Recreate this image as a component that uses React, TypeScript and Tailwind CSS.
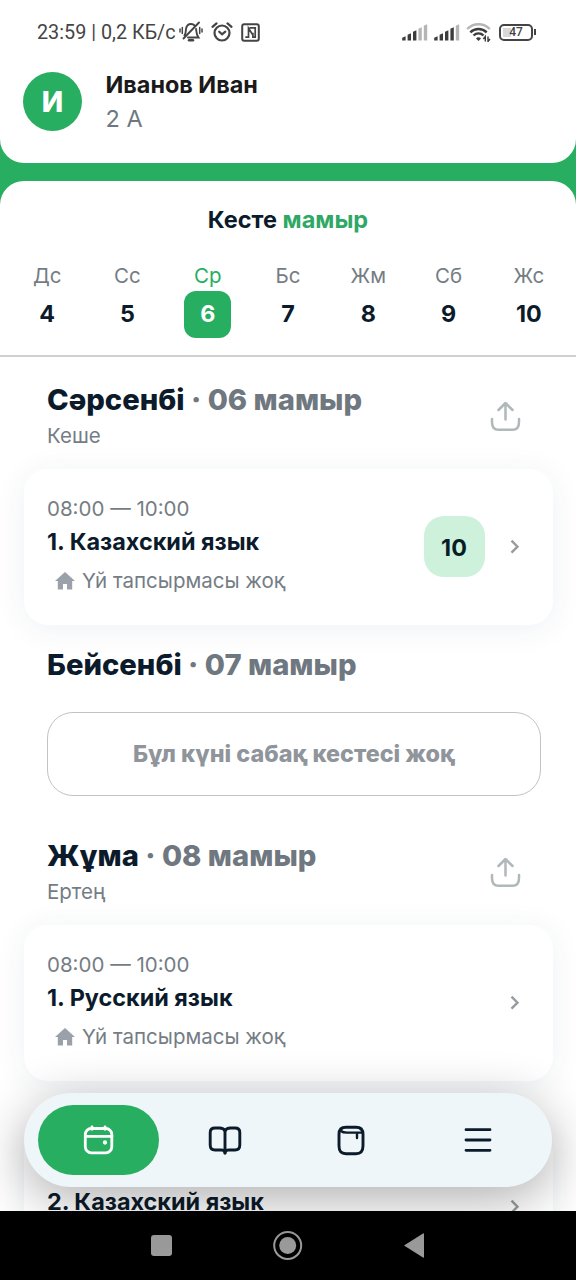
import React from "react";

interface DayProps {
  label: string;
  date: number;
  active?: boolean;
}

interface LessonProps {
  time: string;
  title: string;
  homework?: string;
  mark?: number;
}

interface DayTitleProps {
  day: string;
  date: string;
  note?: string;
}

const days: DayProps[] = [
  { label: "Дс", date: 4 },
  { label: "Сс", date: 5 },
  { label: "Ср", date: 6, active: true },
  { label: "Бс", date: 7 },
  { label: "Жм", date: 8 },
  { label: "Сб", date: 9 },
  { label: "Жс", date: 10 },
];

const Signal = ({ level }: { level: number }) => (
  <svg width="26" height="17" viewBox="0 0 26 17">
    {[4, 7, 10, 13, 16].map((h, i) => (
      <path
        key={h}
        d={`M${i * 5.4 + 0.2} 16.5V${17.7 - h}L${i * 5.4 + 3.6} ${16.2 - h}V16.5Z`}
        fill={i < level ? "#3c3c3c" : "#b5b5b5"}
      />
    ))}
  </svg>
);

const BellOff = () => (
  <svg width="24" height="22" viewBox="0 0 24 22" fill="none" stroke="#444" strokeWidth="1.9" strokeLinecap="round">
    <path d="M5.5 14.5C7 12.8 6.6 10.4 7 7.8 7.5 4.8 9.5 3 12 3c1.6 0 2.8.6 3.7 1.7" />
    <path d="M17.1 8c.4 3.4.1 5.2 2.4 8.5H9" />
    <path d="M20 1.5 4.5 17.5" />
    <path d="M10 19.3h4" strokeWidth="2.4" />
    <path d="M3.3 6.5v6M1 8v3M20.7 6.5v6M23 8v3" strokeWidth="1.5" />
  </svg>
);

const Alarm = () => (
  <svg width="22" height="20" viewBox="0 0 22 20" fill="none" stroke="#444" strokeWidth="2.2" strokeLinecap="round">
    <circle cx="11" cy="11" r="7.5" />
    <path d="M1.5 4.8 5.5 1.4M20.5 4.8 16.5 1.4" />
    <path d="m8.2 9.7 2.9 2.6 3.2-2.6" />
  </svg>
);

const Nfc = () => (
  <svg width="19" height="19" viewBox="0 0 19 19" fill="none" stroke="#444" strokeWidth="2">
    <rect x="1.2" y="1.2" width="16.6" height="16.6" rx="2" />
    <path d="M4.3 14.2h3.2V5.2l4.4 6.8M8.5 4.8h5.7v9.4h-2.3V9.8" strokeWidth="1.7" />
  </svg>
);

const Wifi = () => (
  <svg width="26" height="19" viewBox="0 0 26 19" fill="none" strokeWidth="2.4">
    <path d="M1.2 6C7.5-.4 17.5-.4 23.8 6" stroke="#b5b5b5" />
    <path d="M4.3 9.3c4.6-4.5 11.8-4.5 16.4 0" stroke="#3c3c3c" />
    <path d="M7.5 12.5c2.9-2.8 7.2-2.8 10 0" stroke="#3c3c3c" />
    <path d="m12.5 18-2.5-2.6c1.4-1.4 3.6-1.4 5 0Z" fill="#3c3c3c" />
    <path d="m19.3 18.5v-5l-2 2.5M22 13.5v5l2-2.5" stroke="#3c3c3c" strokeWidth="1.4" />
  </svg>
);

const StatusBar = () => (
  <div className="flex h-16 items-center justify-between pl-[37px] pr-10 font-['Roboto',sans-serif]">
    <div className="flex items-center">
      <span className="w-[142px] whitespace-nowrap pt-px text-[19.8px] text-[#454545]">23:59 | 0,2 КБ/с</span>
      <BellOff />
      <span className="ml-2 mr-2 flex"><Alarm /></span>
      <Nfc />
    </div>
    <div className="flex items-center">
      <Signal level={3} />
      <span className="ml-1.5 flex"><Signal level={4} /></span>
      <span className="ml-1.5 flex"><Wifi /></span>
      <span className="relative ml-[7px] flex h-[17px] w-[34px] items-center justify-center rounded-[5px] border-2 border-[#444] text-[12px] font-medium text-[#444]">
        <span className="absolute left-0.5 top-0.5 h-[9px] w-2 bg-[#d8d8d8]" />
        <span className="relative">47</span>
      </span>
      <span className="ml-px h-1.5 w-0.5 bg-[#444]" />
    </div>
  </div>
);

const Header = () => (
  <header className="h-[163px] rounded-b-3xl bg-white">
    <StatusBar />
    <div className="flex h-[75px] items-center pl-[23px]">
      <div className="flex size-[59px] items-center justify-center rounded-full bg-[#27ae60] text-[28px] font-extrabold text-white">И</div>
      <div className="ml-[23.5px] text-[23.5px]">
        <p className="text-[23.4px] font-bold leading-[34px] text-[#1a1a1a]">Иванов Иван</p>
        <p className="leading-[33px] text-[#6f7881]">2 А</p>
      </div>
    </div>
  </header>
);

const Week = () => (
  <section className="mt-[18px] h-[176px] shrink-0 rounded-t-3xl border-b-2 border-[#cfcfcf] bg-white pt-5 text-[#0b1b2b]">
    <h1 className="text-center text-[23.5px] font-bold leading-[38px]">
      Кесте <span className="text-[#2fa866]">мамыр</span>
    </h1>
    <div className="mt-[22px] grid grid-cols-7 px-[7px]">
      {days.map((d) => (
        <div key={d.label} className="flex flex-col items-center">
          <span className={d.active ? "text-[20.5px] leading-[30px] text-[#27ae60]" : "text-[20.5px] leading-[30px] text-[#757d84]"}>
            {d.label}
          </span>
          <span
            className={
              d.active
                ? "flex size-[47px] items-center justify-center rounded-xl bg-[#27ae60] text-[23.3px] font-bold text-white"
                : "flex size-[47px] items-center justify-center text-[23.3px] font-bold"
            }
          >
            {d.date}
          </span>
        </div>
      ))}
    </div>
  </section>
);

const DayTitle = ({ day, date, note }: DayTitleProps) => (
  <div className="flex items-center justify-between pl-[47px] pr-[55px]">
    <div>
      <h2 className="pb-px text-[29.2px] font-extrabold leading-[39px] text-[#6f7780]">
        <span className="text-[#0b1b2b]">{day}</span> · {date}
      </h2>
      {note && <p className="text-[20.5px] leading-8 text-[#757d84]">{note}</p>}
    </div>
    {note && (
      <svg className="mt-px shrink-0" width="31" height="31" viewBox="0 0 31 31" fill="none" stroke="#b0b8ba" strokeWidth="2.5" strokeLinecap="round" strokeLinejoin="round">
        <path d="M15.5 18.5V2M8.5 9 15.5 2 22.5 9" />
        <path d="M2 18v3c0 5 2 7.8 6.5 7.8h14c4.5 0 6.5-2.8 6.5-7.8v-3" />
      </svg>
    )}
  </div>
);

const Lesson = ({ time, title, homework, mark }: LessonProps) => (
  <div className="mx-[23.5px] flex h-[156px] shrink-0 items-center rounded-3xl bg-white pl-[23.5px] pr-8 shadow-[0_4px_32px_rgba(20,50,80,0.07)]">
    <div className="h-[108px] flex-1 text-[20.5px] text-[#757d84]">
      <p className="leading-8">{time}</p>
      <p className="text-[23.4px] font-bold leading-[34px] text-[#0b1b2b]">{title}</p>
      {homework && (
        <p className="flex items-center gap-[7px] pl-2 leading-[44px]">
          <svg width="20" height="18" viewBox="0 0 20 18" fill="#9ba1aa">
            <path d="M10 0 20 9h-2.8v8.500h-5.200v-5.500h-4v5.500H2.800V9H0Z" />
          </svg>
          {homework}
        </p>
      )}
    </div>
    {mark && (
      <span className="mr-6 flex size-[61px] items-center justify-center rounded-[20px] bg-[#cdf1db] pt-1 text-[23.3px] font-bold text-[#061f26]">
        {mark}
      </span>
    )}
    <svg width="12" height="16" viewBox="0 0 12 16" fill="none" stroke="#989c9f" strokeWidth="2.4">
      <path d="m2.5 1.7 6 6-6 6" />
    </svg>
  </div>
);

const TabBar = () => (
  <nav className="absolute left-6 top-[1093px] flex h-[94px] w-[528px] items-center rounded-full bg-[#eff6f9] pl-3.5 pr-[11px] text-[#0b1b2b] shadow-[0_12px_52px_rgba(0,0,0,0.32)]">
    <div className="mr-[3px] flex h-[70px] w-[121px] items-center justify-center rounded-full bg-[#27ae60]">
      <svg width="32" height="32" viewBox="0 0 32 32" fill="none" stroke="white" strokeWidth="2.8" strokeLinecap="round">
        <rect x="2.3" y="4.5" width="26.5" height="24.3" rx="6" />
        <path d="M3 12.3h26M9 2.8v2.5M22 2.8v2.5" />
        <circle cx="22" cy="18.5" r="1.3" fill="white" strokeWidth="1.7" />
      </svg>
    </div>
    <div className="flex flex-1 items-center justify-center">
      <svg width="34" height="32" viewBox="0 0 34 32" fill="none" stroke="currentColor" strokeWidth="2.9" strokeLinecap="round" strokeLinejoin="round">
        <path d="M17 6.8C16 4.7 14 4 11.5 4H7C3.5 4 2.2 5.5 2.2 8.5v12.5c0 3.5 1.3 5 4.8 5h6c2.5 0 4 .5 4 2.8 0-2.3 1.5-2.8 4-2.8h6c3.5 0 4.800-1.500 4.800-5V8.500C31.800 5.500 30.500 4 27 4h-4.500C20 4 18 4.700 17 6.800Z" />
        <path d="M17 6.8v22.500" />
      </svg>
    </div>
    <div className="flex flex-1 items-center justify-center">
      <svg width="28" height="32" viewBox="0 0 28 32" fill="none" stroke="currentColor" strokeWidth="2.9" strokeLinecap="round" strokeLinejoin="round">
        <path d="M9 3.2h10c5 0 7 2.5 7 7v11.5c0 5.5-2 8-7 8H9c-5 0-7-2.5-7-8V10.2c0-4.5 2-7 7-7Z" />
        <path d="M4 7c2 1.8 4 1.6 7 1.6h13.5M20 8.6v5.4" strokeWidth="2.4" />
      </svg>
    </div>
    <div className="flex flex-1 items-center justify-center">
      <svg width="28" height="24" viewBox="0 0 28 24" fill="none" stroke="currentColor" strokeWidth="2.8" strokeLinecap="round">
        <path d="M2 1.7h24M2 12h24M2 22.3h24" />
      </svg>
    </div>
  </nav>
);

const SystemNav = () => (
  <div className="flex h-[69px] shrink-0 items-center bg-black pl-[150px]">
    <svg width="276" height="30" viewBox="0 0 276 30" fill="#9b9b9b">
      <rect x="1" y="4" width="21" height="21" rx="3" />
      <circle cx="137.7" cy="14.5" r="8.5" />
      <circle cx="137.7" cy="14.5" r="13.5" fill="none" stroke="#9b9b9b" strokeWidth="2" />
      <path d="M254 14.5 273 2.5q1-.5 1 .5v23q0 1-1 .5Z" />
    </svg>
  </div>
);

export default function App() {
  return (
    <div className="relative flex h-[1280px] w-[576px] flex-col overflow-hidden bg-[#27ae60] font-['Inter',sans-serif]">
      <Header />
      <Week />
      <main className="flex min-h-0 flex-1 flex-col overflow-hidden bg-white pt-[22.5px]">
        <DayTitle day="Сәрсенбі" date="06 мамыр" note="Кеше" />
        <div className="h-[17px] shrink-0" />
        <Lesson time="08:00 — 10:00" title="1. Казахский язык" homework="Үй тапсырмасы жоқ" mark={10} />
        <div className="h-5 shrink-0" />
        <DayTitle day="Бейсенбі" date="07 мамыр" />
        <div className="ml-[47px] mr-[35px] mt-[27px] flex h-[84px] shrink-0 items-center justify-center rounded-[26px] border-[1.5px] border-[#c0c4c5] pt-px text-[23.4px] font-extrabold text-[#8f959b]">
          Бұл күні сабақ кестесі жоқ
        </div>
        <div className="h-10 shrink-0" />
        <DayTitle day="Жұма" date="08 мамыр" note="Ертең" />
        <div className="h-[17px] shrink-0" />
        <Lesson time="08:00 — 10:00" title="1. Русский язык" homework="Үй тапсырмасы жоқ" />
        <div className="h-12 shrink-0" />
        <Lesson time="10:10 — 12:00" title="2. Казахский язык" />
      </main>
      <TabBar />
      <SystemNav />
    </div>
  );
}
